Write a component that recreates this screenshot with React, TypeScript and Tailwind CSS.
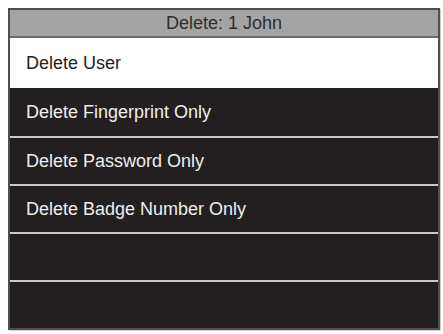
const items = [
  "Delete Fingerprint Only",
  "Delete Password Only",
  "Delete Badge Number Only",
  "",
  "",
];

export default function App() {
  return (
    <div className="w-[443px] h-[334px] bg-white pt-[8px] pl-[8px]">
      <div
        className="w-[432px] h-[322px] border-2 border-[#4f4f4f] flex flex-col bg-[#231f20] shadow-[1px_1px_0_#cfcfcf]"
        style={{ fontFamily: '"Liberation Sans", Arial, sans-serif' }}
      >
        <div className="h-[28px] bg-[#a4a4a4] border-b-2 border-[#6b6b6b] flex items-center justify-center text-[18px] leading-none text-[#2e2e2e]">
          Delete: 1 John
        </div>
        <div className="h-[50px] bg-white flex items-center pl-4 text-[18px] text-[#222]">
          Delete User
        </div>
        {items.map((label, i) => (
          <div
            key={i}
            className={
              i === 0
                ? "h-[48px] flex items-center pl-4 text-[18px] text-[#eeeeee]"
                : "h-[48px] flex items-center pl-4 text-[18px] text-[#eeeeee] border-t-2 border-[#c9c9c9]"
            }
          >
            {label}
          </div>
        ))}
      </div>
    </div>
  );
}
